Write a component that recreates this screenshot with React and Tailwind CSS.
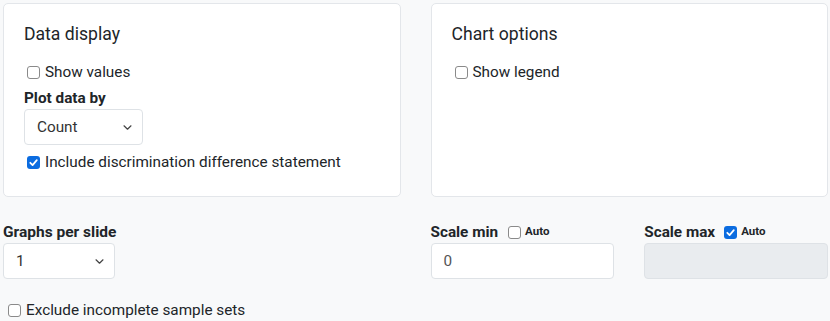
import React from "react";

function Check({ checked }) {
  if (checked) {
    return (
      <span className="flex h-[13px] w-[13px] shrink-0 items-center justify-center rounded-[3px] bg-[#0b6ce0]">
        <svg width="11" height="11" viewBox="0 0 12 12" fill="none">
          <path d="M2.5 6.3 L5 8.8 L9.6 3.4" stroke="white" strokeWidth="1.9" strokeLinecap="round" strokeLinejoin="round" />
        </svg>
      </span>
    );
  }
  return <span className="h-[13px] w-[13px] shrink-0 rounded-[3px] border border-[#8a8a8a] bg-white" />;
}

function CheckRow({ checked, children, className = "" }) {
  return (
    <label className={`flex h-[22px] items-center gap-[5px] text-[15.3px] ${className}`}>
      <Check checked={checked} />
      <span>{children}</span>
    </label>
  );
}

function Select({ value, className = "" }) {
  return (
    <div className={`flex h-[36px] items-center justify-between rounded-[4px] border border-[#dee2e6] bg-white pl-[12px] pr-[10px] text-[15.3px] text-[#333] ${className}`}>
      <span>{value}</span>
      <svg width="9" height="5" viewBox="0 0 9 5" fill="none">
        <path d="M1 0.8 L4.5 4.2 L8 0.8" stroke="#444" strokeWidth="1.2" strokeLinecap="round" strokeLinejoin="round" />
      </svg>
    </div>
  );
}

function Card({ title, children }) {
  return (
    <div className="rounded-[5px] border border-[#e3e6ea] bg-white px-[20px] pt-[20px] pb-[23px]">
      <h3 className="mb-[16px] text-[17.6px] leading-[21px]">{title}</h3>
      {children}
    </div>
  );
}

export default function App() {
  return (
    <main className="h-[321px] w-[830px] overflow-hidden bg-[#f8f9fa] pl-[3px] pr-[2px] pt-[3px] text-[#212529] font-['Roboto',sans-serif]">
      <div className="grid grid-cols-2 gap-[30px]">
        <Card title="Data display">
          <CheckRow className="pl-[3px]">Show values</CheckRow>
          <div className="mt-[5px] text-[15.3px] font-bold leading-[21px]">Plot data by</div>
          <Select value="Count" className="w-[119px]" />
          <CheckRow checked className="mt-[6px] pl-[3px]">Include discrimination difference statement</CheckRow>
        </Card>
        <Card title="Chart options">
          <CheckRow className="pl-[3px]">Show legend</CheckRow>
        </Card>
      </div>

      <div className="mt-[24px] grid grid-cols-2 gap-[30px]">
        <div>
          <div className="text-[15.5px] font-bold leading-[22px]">Graphs per slide</div>
          <Select value="1" className="w-[112px]" />
        </div>
        <div className="grid grid-cols-2 gap-[30px]">
          <div>
            <div className="flex h-[22px] items-center">
              <span className="text-[15.3px] font-bold">Scale min</span>
              <span className="ml-[10px] flex items-center gap-[4px] text-[11.5px] font-bold">
                <Check />
                Auto
              </span>
            </div>
            <div className="flex h-[36px] items-center rounded-[4px] border border-[#dee2e6] bg-white px-[12px] text-[15.3px] text-[#555]">0</div>
          </div>
          <div>
            <div className="flex h-[22px] items-center">
              <span className="text-[15.3px] font-bold">Scale max</span>
              <span className="ml-[9px] flex items-center gap-[4px] text-[11.5px] font-bold">
                <Check checked />
                Auto
              </span>
            </div>
            <div className="h-[36px] rounded-[4px] border border-[#dee2e6] bg-[#e9ecef]" />
          </div>
        </div>
      </div>

      <CheckRow className="mt-[20px] pl-[5px]">Exclude incomplete sample sets</CheckRow>
    </main>
  );
}
